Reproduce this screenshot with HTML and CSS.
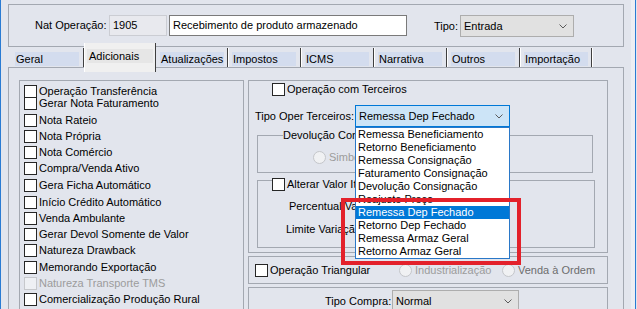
FILE: index.html
```html
<!DOCTYPE html>
<html lang="pt">
  <head>
    <meta charset="UTF-8" />
    <title>Natureza de Operação</title>
    <link rel="stylesheet" href="styles.css">
  </head>
  <body>
    <div class="window">
      <div class="main">
        <div class="head">
          <span class="lbl lbl-nat">Nat Operação:</span>
          <span class="field field-code">1905</span>
          <span class="field field-desc">Recebimento de produto armazenado</span>
          <span class="lbl lbl-tipo">Tipo:</span>
          <span class="combo combo-tipo">Entrada
            <svg class="chev" width="8" height="5" viewBox="0 0 8 5"><polyline points="0.5,0.5 4,4 7.5,0.5" /></svg>
          </span>
        </div>

        <div class="tabs">
          <div class="tab"><span class="tab-text">Geral</span></div>
          <div class="tab tab-active"><span class="tab-text">Adicionais</span></div>
          <div class="tab tab-w72"><span class="tab-text">Atualizações</span></div>
          <div class="tab"><span class="tab-text">Impostos</span></div>
          <div class="tab"><span class="tab-text">ICMS</span></div>
          <div class="tab"><span class="tab-text">Narrativa</span></div>
          <div class="tab"><span class="tab-text">Outros</span></div>
          <div class="tab tab-w72"><span class="tab-text">Importação</span></div>
        </div>

        <div class="page">
          <div class="flags">
            <div class="row row-12"><span class="check"></span><span class="text">Operação Transferência</span></div>
            <div class="row row-17"><span class="check"></span><span class="text">Gerar Nota Faturamento</span></div>
            <div class="row"><span class="check"></span><span class="text">Nota Rateio</span></div>
            <div class="row"><span class="check"></span><span class="text">Nota Própria</span></div>
            <div class="row"><span class="check"></span><span class="text">Nota Comércio</span></div>
            <div class="row row-17"><span class="check"></span><span class="text">Compra/Venda Ativo</span></div>
            <div class="row row-17"><span class="check"></span><span class="text">Gera Ficha Automático</span></div>
            <div class="row"><span class="check"></span><span class="text">Início Crédito Automático</span></div>
            <div class="row"><span class="check"></span><span class="text">Venda Ambulante</span></div>
            <div class="row"><span class="check"></span><span class="text">Gerar Devol Somente de Valor</span></div>
            <div class="row row-17"><span class="check"></span><span class="text">Natureza Drawback</span></div>
            <div class="row"><span class="check"></span><span class="text">Memorando Exportação</span></div>
            <div class="row disabled"><span class="check"></span><span class="text">Natureza Transporte TMS</span></div>
            <div class="row"><span class="check"></span><span class="text">Comercialização Produção Rural</span></div>
          </div>

          <div class="side">
            <div class="box box-terceiros">
              <div class="row row-terceiros"><span class="check"></span><span class="text">Operação com Terceiros</span></div>

              <div class="tipo-oper">
                <span class="lbl lbl-oper">Tipo Oper Terceiros:</span>
                <div class="combo-wrap">
                  <span class="combo combo-open">Remessa Dep Fechado
                    <svg class="chev" width="8" height="5" viewBox="0 0 8 5"><polyline points="0.5,0.5 4,4 7.5,0.5" /></svg>
                  </span>
                  <ul class="list">
                    <li>Remessa Beneficiamento</li>
                    <li>Retorno Beneficiamento</li>
                    <li>Remessa Consignação</li>
                    <li>Faturamento Consignação</li>
                    <li>Devolução Consignação</li>
                    <li>Reajuste Preço</li>
                    <li class="selected">Remessa Dep Fechado</li>
                    <li>Retorno Dep Fechado</li>
                    <li>Remessa Armaz Geral</li>
                    <li>Retorno Armaz Geral</li>
                  </ul>
                </div>
              </div>

              <div class="group group-devol">
                <div class="caption caption-devol"><span class="text">Devolução Consignação</span></div>
                <div class="radio-row radio-simb disabled"><span class="radio"></span><span class="text">Simbólica</span></div>
              </div>

              <div class="group group-alterar">
                <div class="caption caption-alterar"><span class="check"></span><span class="text">Alterar Valor Item</span></div>
                <div class="lbl lbl-perc">Percentual Valor:</div>
                <div class="lbl lbl-limite">Limite Variação:</div>
              </div>
            </div>

            <div class="box box-triang">
              <div class="row-inline item-triang"><span class="check"></span><span class="text">Operação Triangular</span></div>
              <div class="radio-row item-indus disabled"><span class="radio"></span><span class="text">Industrialização</span></div>
              <div class="radio-row disabled dim"><span class="radio"></span><span class="text">Venda à Ordem</span></div>
            </div>

            <div class="box box-compra">
              <span class="lbl lbl-compra">Tipo Compra:</span>
              <span class="combo combo-compra">Normal
                <svg class="chev" width="8" height="5" viewBox="0 0 8 5"><polyline points="0.5,0.5 4,4 7.5,0.5" /></svg>
              </span>
            </div>
          </div>

          <div class="mark"></div>
        </div>
      </div>
      <div class="gutter"></div>
      <div class="band"></div>
      <div class="edge"></div>
    </div>
  </body>
</html>
```

FILE: styles.css
```css
* {
  margin: 0;
  padding: 0;
  box-sizing: border-box;
}

body {
  font-family: "Liberation Sans", Arial, sans-serif;
  font-size: 11px;
  color: #000;
  background: #e2e5ed;
  overflow: hidden;
}

.window {
  display: flex;
  width: 637px;
  height: 309px;
  border-left: 1px solid #2a7bd3;
  background: #e2e5ed;
  overflow: hidden;
}

.main {
  width: 623px;
  padding: 4px 0 0 7px;
}

.gutter {
  width: 7px;
}

.band {
  width: 4px;
  background: #eceef3;
}

.edge {
  width: 1px;
  background: #2a7bd3;
}

/* header */
.head {
  display: flex;
  align-items: flex-start;
  height: 43px;
  padding-top: 10px;
  border: 1px solid #a3a8b1;
}

.lbl {
  white-space: nowrap;
}

.lbl-nat {
  width: 74px;
  margin-left: 26px;
  line-height: 21px;
}

.field {
  height: 21px;
  line-height: 19px;
  padding-left: 3px;
  white-space: nowrap;
}

.field-code {
  width: 58px;
  background: #e8e9ee;
  border: 1px solid #cbcdd3;
}

.field-desc {
  width: 238px;
  margin-left: 2px;
  background: #fff;
  border: 1px solid #7a7a7a;
}

.lbl-tipo {
  width: 26px;
  margin-left: 27px;
  line-height: 22px;
}

.combo {
  display: flex;
  align-items: center;
  justify-content: space-between;
  height: 22px;
  padding: 0 6px 0 3px;
  background: #e1e1e1;
  border: 1px solid #adadad;
  white-space: nowrap;
}

.combo-tipo {
  width: 114px;
}

.chev polyline {
  fill: none;
  stroke: #5a5a5a;
  stroke-width: 1;
}

/* tabs */
.tabs {
  display: flex;
  align-items: flex-end;
  height: 20px;
  margin-left: 3px;
}

.tab {
  width: 73px;
  height: 19px;
  padding: 4px 0 0 4px;
  border-right: 1px solid #3f3f3f;
  box-shadow: 1px 0 0 #fff;
}

.tab-w72 {
  width: 72px;
}

.tab-text {
  display: block;
  width: 64px;
  height: 14px;
  line-height: 14px;
  padding-left: 1px;
  background: #d3dcee;
  white-space: nowrap;
}

.tab-active {
  position: relative;
  z-index: 1;
  width: 72px;
  height: 29px;
  margin-top: -4px;
  margin-bottom: -5px;
  padding: 6px 0 0 2px;
  background: #f0f0f0;
  border-left: 1px solid #fff;
  box-shadow: none;
}

.tab-active .tab-text {
  width: 66px;
  background: #e6e6e6;
  padding-left: 2px;
}

/* page */
.page {
  position: relative;
  display: flex;
  align-items: flex-start;
  height: 260px;
  padding: 12px 0 0 10px;
  border: 1px solid #a3a8b1;
}

.flags {
  width: 225px;
  height: 240px;
  padding: 4px 0 0 4px;
  border: 1px solid #a3a8b1;
}

.row {
  display: flex;
  align-items: flex-start;
  height: 16px;
}

.row-12 {
  height: 12px;
}

.row-17 {
  height: 17px;
}

.check {
  flex: none;
  width: 13px;
  height: 13px;
  background: #fff;
  border: 1px solid #262626;
}

.text {
  margin-left: 2px;
  line-height: 13px;
  white-space: nowrap;
}

.disabled .text {
  color: #9c9c9c;
}

.disabled.dim .text {
  color: #6d6d6d;
}

.disabled .check {
  background: #eef0f4;
  border-color: #c6c8cc;
}

.side {
  display: flex;
  flex-direction: column;
  gap: 3px;
  width: 360px;
  margin-left: 4px;
}

.box {
  border: 1px solid #a3a8b1;
}

.box-terceiros {
  height: 173px;
}

.row-terceiros {
  height: 13px;
  margin: 2px 0 0 23px;
}

.tipo-oper {
  display: flex;
  align-items: center;
  margin-top: 9px;
  padding-left: 6px;
}

.lbl-oper {
  width: 100px;
}

.combo-wrap {
  position: relative;
}

.combo-open {
  width: 155px;
  background: #cce4f7;
  border-color: #0078d7;
}

.list {
  position: absolute;
  top: 100%;
  left: 0;
  z-index: 2;
  width: 155px;
  list-style: none;
  background: #fff;
  border: 1px solid #2a78c8;
}

.list li {
  height: 13px;
  line-height: 13px;
  padding-left: 2px;
  white-space: nowrap;
}

.list li.selected {
  background: #0078d7;
  color: #fff;
}

.group {
  margin: 8px 0 0 8px;
  border: 1px solid #a3a8b1;
}

.group-devol {
  width: 336px;
  height: 38px;
}

.caption {
  display: flex;
  align-items: center;
  height: 13px;
}

.caption .text {
  margin-left: 0;
  background: #e2e5ed;
}

.caption-devol {
  margin: -7px 0 0 25px;
}

.radio-row {
  display: flex;
  align-items: center;
}

.radio {
  flex: none;
  width: 13px;
  height: 13px;
  border-radius: 50%;
  background: #fff;
  border: 1px solid #333;
}

.disabled .radio {
  background: #f0f1f3;
  border-color: #c4c6ca;
}

.radio-row .text {
  margin-left: 3px;
}

.radio-simb {
  margin: 9px 0 0 55px;
}

.group-alterar {
  width: 338px;
  height: 68px;
  margin-top: 7px;
}

.caption-alterar {
  margin: -3px 0 0 14px;
}

.caption-alterar .text {
  margin-left: 0;
  padding-left: 2px;
}

.lbl-perc {
  margin: 9px 0 0 31px;
  line-height: 13px;
}

.lbl-limite {
  margin: 10px 0 0 28px;
  line-height: 13px;
}

.box-triang {
  display: flex;
  align-items: center;
  height: 28px;
  padding-left: 6px;
}

.row-inline {
  display: flex;
  align-items: center;
}

.item-triang {
  width: 144px;
}

.item-indus {
  width: 103px;
}

.box-compra {
  display: flex;
  align-items: flex-start;
  height: 40px;
  padding: 2px 0 0 76px;
}

.lbl-compra {
  width: 67px;
  line-height: 22px;
}

.combo-compra {
  width: 127px;
}

/* red highlight drawn over the list */
.mark {
  position: absolute;
  left: 332px;
  top: 130px;
  z-index: 3;
  width: 180px;
  height: 67px;
  border: 4px solid #e3212b;
}
```
